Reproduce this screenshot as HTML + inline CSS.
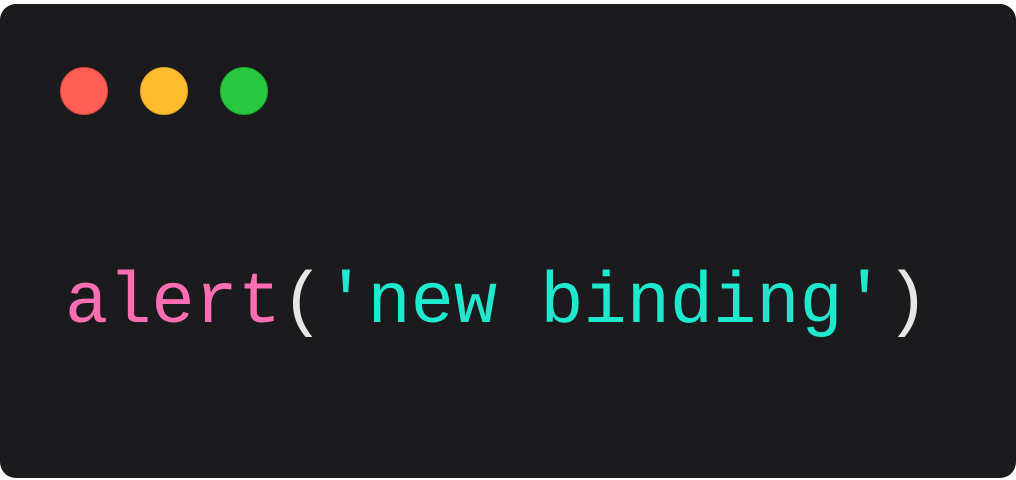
<!DOCTYPE html>
<html><head><style>
html,body{margin:0;padding:0;background:#fff;width:1016px;height:480px;overflow:hidden}
.card{position:absolute;left:0;top:4px;width:1016px;height:474px;background:#1b1b1d;border-radius:16px}
.d{position:absolute;top:67px;width:46px;height:46px;border-radius:50%;border:1.5px solid}
pre{position:absolute;left:65px;top:258px;margin:0;font-family:"Liberation Mono","DejaVu Sans Mono",monospace;font-size:72px;line-height:90px;letter-spacing:0}
.p{color:#ff6eb2}.c{color:#1ee9cf}.w{color:#e6e6e6}
</style></head><body>
<div class="card"></div>
<div class="d" style="left:60px;background:#ff5f57;border-color:#e0443e"></div>
<div class="d" style="left:140px;background:#febc2e;border-color:#dea123"></div>
<div class="d" style="left:220px;background:#28c840;border-color:#1aab29"></div>
<pre><span class="p">alert</span><span class="w">(</span><span class="c">'new binding'</span><span class="w">)</span></pre>
</body></html>
